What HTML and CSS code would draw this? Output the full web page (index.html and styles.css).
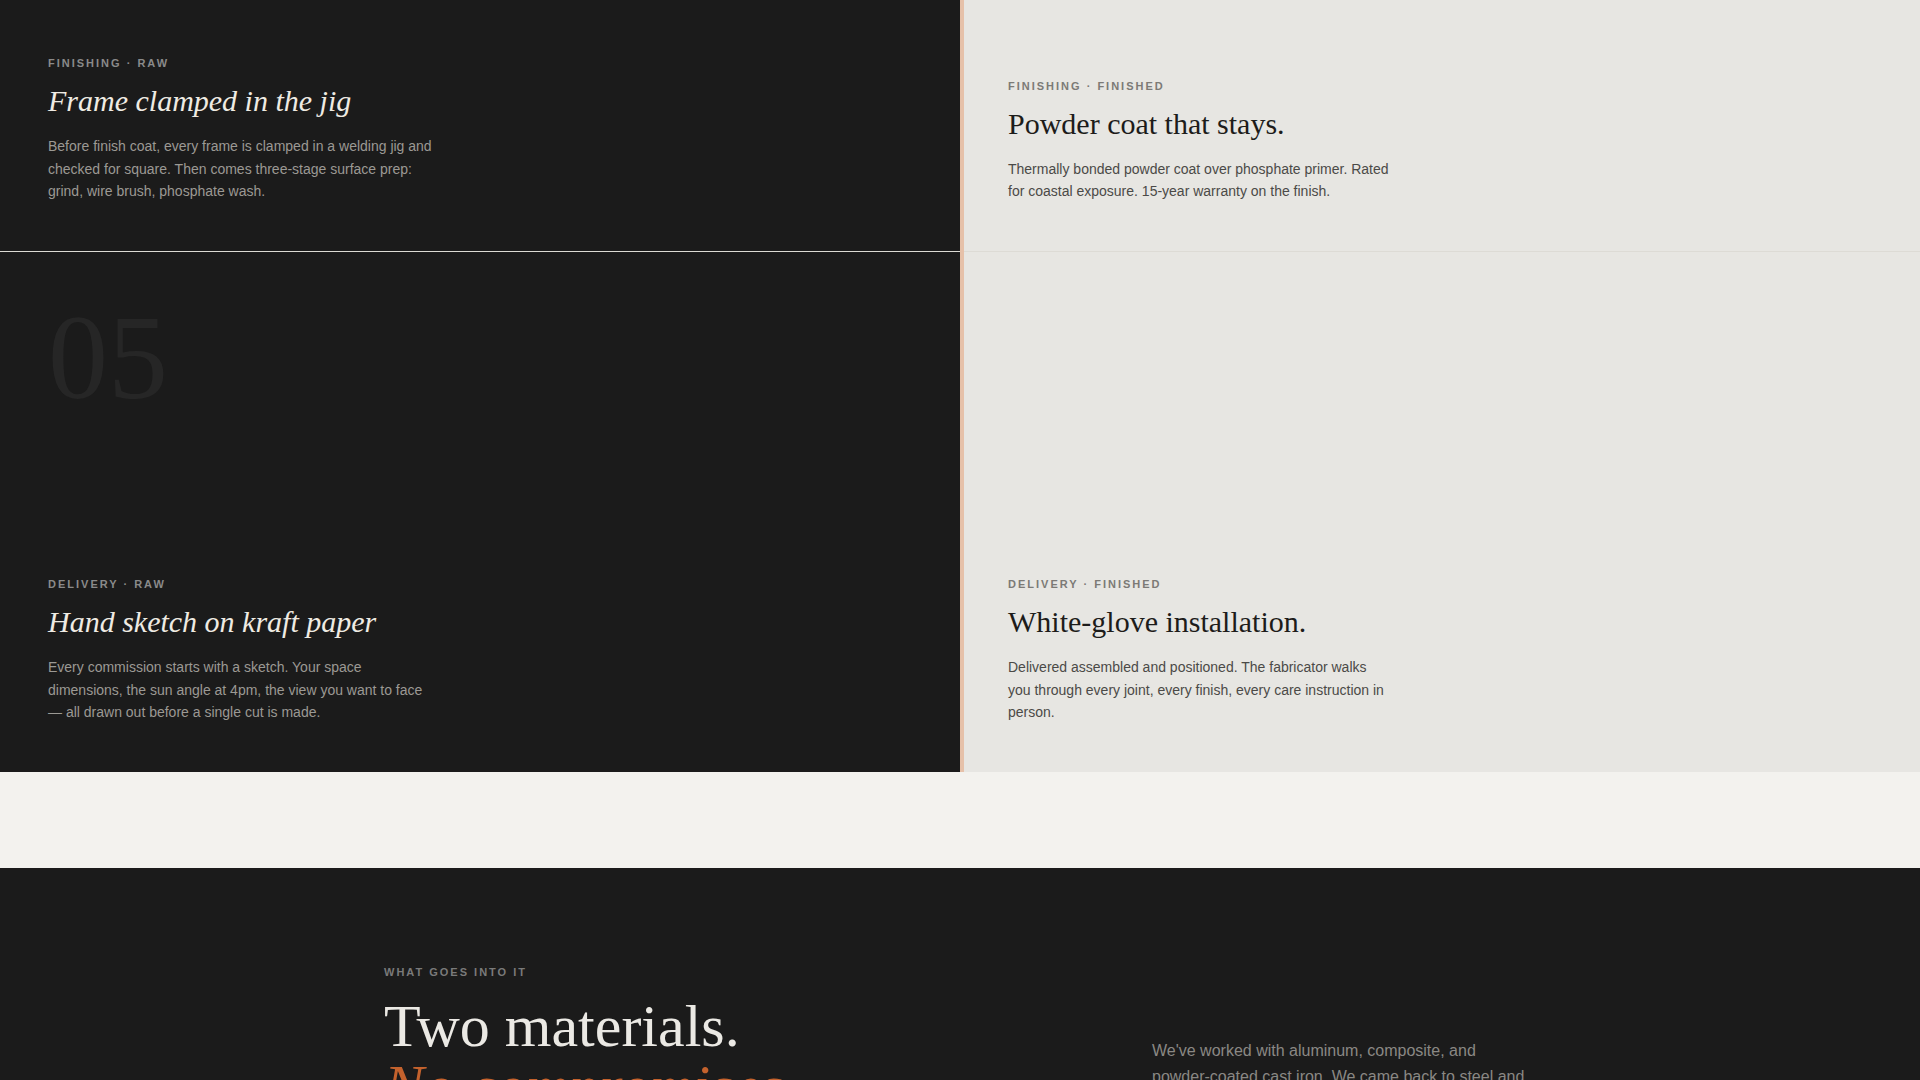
FILE: index.html
```html
<!DOCTYPE html>
<html lang="en">
<head>
    <meta charset="UTF-8">
    <meta name="viewport" content="width=device-width, initial-scale=1.0">
    <title>Process - Raw vs Finished</title>
    <link rel="stylesheet" href="styles.css">
</head>
<body>
    <section class="compare">
        <div class="compare-grid">
            <div class="compare-cell raw row-cut">
                <div class="cell-text">
                    <p class="cell-label">Finishing · Raw</p>
                    <h3 class="cell-title">Frame clamped in the jig</h3>
                    <p class="cell-copy">Before finish coat, every frame is clamped in a welding jig and checked for square. Then comes three-stage surface prep: grind, wire brush, phosphate wash.</p>
                </div>
            </div>
            <div class="compare-cell finished row-cut">
                <div class="cell-text">
                    <p class="cell-label">Finishing · Finished</p>
                    <h3 class="cell-title">Powder coat that stays.</h3>
                    <p class="cell-copy">Thermally bonded powder coat over phosphate primer. Rated for coastal exposure. 15-year warranty on the finish.</p>
                </div>
            </div>

            <div class="compare-cell raw">
                <span class="step-number">05</span>
                <div class="cell-text">
                    <p class="cell-label">Delivery · Raw</p>
                    <h3 class="cell-title">Hand sketch on kraft paper</h3>
                    <p class="cell-copy">Every commission starts with a sketch. Your space dimensions, the sun angle at 4pm, the view you want to face — all drawn out before a single cut is made.</p>
                </div>
            </div>
            <div class="compare-cell finished">
                <div class="cell-text">
                    <p class="cell-label">Delivery · Finished</p>
                    <h3 class="cell-title">White-glove installation.</h3>
                    <p class="cell-copy">Delivered assembled and positioned. The fabricator walks you through every joint, every finish, every care instruction in person.</p>
                </div>
            </div>

            <div class="compare-handle"></div>
        </div>
    </section>

    <section class="materials">
        <div class="materials-inner">
            <div class="materials-head">
                <p class="section-label">What goes into it</p>
                <h2 class="materials-title">Two materials.<br><em>No compromises.</em></h2>
            </div>
            <p class="materials-intro">We've worked with aluminum, composite, and powder-coated cast iron. We came back to steel and teak because nothing else ages as well.</p>
        </div>
    </section>
</body>
</html>
```

FILE: styles.css
```css
:root {
    --ink: #1b1b1b;
    --paper: #f3f2ee;
    --stone: #e7e6e2;
    --rule: #dddbd5;
    --accent: #c4622d;
    --handle: #e6c1a9;
    --serif: 'Liberation Serif', 'Times New Roman', serif;
    --sans: 'Liberation Sans', Arial, sans-serif;
}

* {
    margin: 0;
    padding: 0;
    box-sizing: border-box;
}

body {
    font-family: var(--sans);
    background: var(--paper);
    color: var(--ink);
}

/* Raw / finished comparison */
.compare {
    padding-bottom: 96px;
}

.compare-grid {
    position: relative;
    display: grid;
    grid-template-columns: 1fr 1fr;
}

.compare-cell {
    display: flex;
    flex-direction: column;
    justify-content: space-between;
    min-height: 520px;
    padding: 48px;
}

.compare-cell.row-cut {
    min-height: 252px;
    justify-content: flex-end;
    border-bottom: 1px solid var(--rule);
}

.compare-cell.raw {
    background: var(--ink);
}

.compare-cell.finished {
    background: var(--stone);
}

.cell-text {
    margin-top: auto;
}

.cell-label {
    font-size: 11px;
    font-weight: 700;
    letter-spacing: 2px;
    text-transform: uppercase;
    line-height: 16px;
    margin-bottom: 12px;
}

.raw .cell-label {
    color: #8a8a8a;
}

.finished .cell-label {
    color: #7c7a76;
}

.cell-title {
    font-family: var(--serif);
    font-size: 30px;
    font-weight: 400;
    line-height: 1.2;
    margin-bottom: 16px;
}

.raw .cell-title {
    font-style: italic;
    color: #efebe3;
}

.finished .cell-title {
    color: #1d1c1a;
}

.cell-copy {
    max-width: 384px;
    font-size: 14px;
    line-height: 1.625;
}

.raw .cell-copy {
    color: #9b9994;
}

.finished .cell-copy {
    color: #4b4a47;
}

.step-number {
    margin-top: 4px;
    font-family: var(--serif);
    font-size: 120px;
    line-height: 0.9;
    color: #262626;
}

.compare-handle {
    position: absolute;
    top: 0;
    bottom: 0;
    left: 50%;
    width: 4px;
    background: var(--handle);
}

/* Materials intro */
.materials {
    background: var(--ink);
    padding: 96px 0;
}

.materials-inner {
    max-width: 1152px;
    margin: 0 auto;
    display: grid;
    grid-template-columns: 2fr 1fr;
    align-items: end;
}

.section-label {
    font-size: 11px;
    font-weight: 700;
    letter-spacing: 2px;
    text-transform: uppercase;
    line-height: 16px;
    color: #7a7a7a;
    margin-bottom: 16px;
}

.materials-title {
    font-family: var(--serif);
    font-size: 60px;
    font-weight: 400;
    line-height: 1;
    color: #ebe9e4;
}

.materials-title em {
    color: var(--accent);
}

.materials-intro {
    font-size: 16px;
    line-height: 1.625;
    color: #8a8884;
}
```
